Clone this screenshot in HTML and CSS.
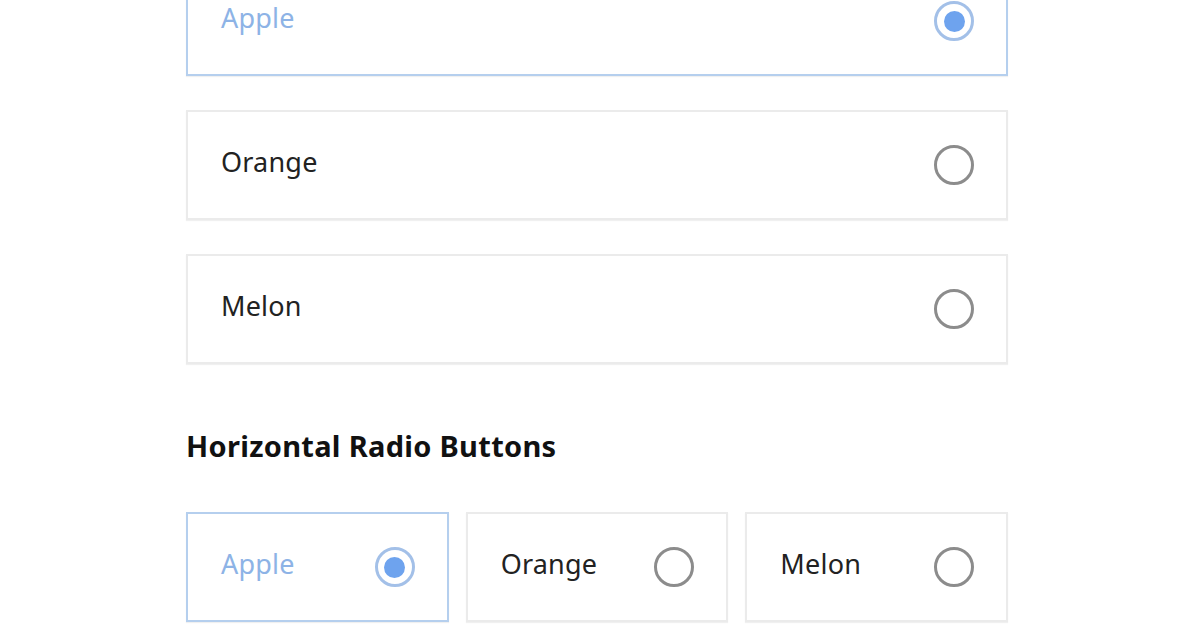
FILE: index.html
```html
<!DOCTYPE html>
<html lang="en">
<head>
	<meta charset="UTF-8">
	<title>Radio Buttons</title>
	<link rel="stylesheet" href="styles.css">
</head>
<body>
	<div class="content">
		<div class="radio-list">
			<label class="radio-item checked">
				<span class="radio-text">Apple</span>
				<span class="radio-mark"></span>
			</label>
			<label class="radio-item">
				<span class="radio-text">Orange</span>
				<span class="radio-mark"></span>
			</label>
			<label class="radio-item">
				<span class="radio-text">Melon</span>
				<span class="radio-mark"></span>
			</label>
		</div>
		<h3 class="group-title">Horizontal Radio Buttons</h3>
		<div class="radio-row">
			<label class="radio-item checked">
				<span class="radio-text">Apple</span>
				<span class="radio-mark"></span>
			</label>
			<label class="radio-item">
				<span class="radio-text">Orange</span>
				<span class="radio-mark"></span>
			</label>
			<label class="radio-item">
				<span class="radio-text">Melon</span>
				<span class="radio-mark"></span>
			</label>
		</div>
	</div>
</body>
</html>
```

FILE: styles.css
```css
html,body{
	margin:0;
	background: #fff;
	height: 100%;
	overflow: hidden;
}
body{
	font-family: "Noto Sans", "Noto Sans CJK KR", sans-serif;
	color: #222;
}
.content{
	width: 822px;
	margin-left: 186px;
	margin-top: -34px;
}
.radio-list{
	display: flex;
	flex-direction: column;
	gap: 34px;
}
.radio-row{
	display: flex;
	gap: 17px;
}
.radio-row .radio-item{
	flex: 1;
}
.radio-item{
	display: flex;
	align-items: center;
	justify-content: space-between;
	height: 110px;
	box-sizing: border-box;
	padding: 0 32px 0 33px;
	border: 2px solid #ebebeb;
	box-shadow: 0 1px 1px rgba(0,0,0,0.06);
	background: #fff;
	cursor: pointer;
}
.radio-item.checked{
	border-color: #b5cfee;
}
.radio-text{
	font-size: 27px;
	line-height: 1;
	margin-top: -7px;
	letter-spacing: 0.2px;
}
.radio-item.checked .radio-text{
	color: #8db3e6;
}
.radio-mark{
	width: 40px;
	height: 40px;
	box-sizing: border-box;
	border: 3px solid #8c8c8c;
	border-radius: 50%;
	display: flex;
	align-items: center;
	justify-content: center;
}
.radio-item.checked .radio-mark{
	border-color: #a3c0e8;
}
.radio-item.checked .radio-mark:after{
	content: "";
	width: 21px;
	height: 21px;
	border-radius: 50%;
	background: #6ea3ee;
}
.group-title{
	font-size: 29px;
	font-weight: bold;
	letter-spacing: 0.3px;
	margin: 64px 0 48px;
	line-height: 36px;
	color: #111;
}
```
